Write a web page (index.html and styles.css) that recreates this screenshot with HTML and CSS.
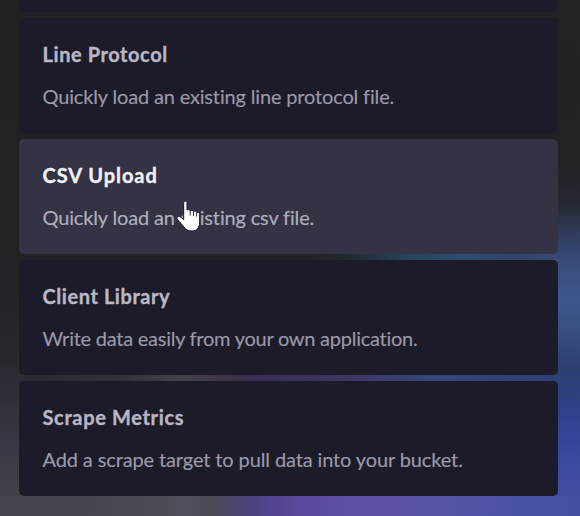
FILE: index.html
```
<!DOCTYPE html>
<html lang="en">
<head>
<meta charset="utf-8">
<title>Load Data</title>
<link rel="stylesheet" href="styles.css">
</head>
<body>
<main class="sources">
  <div class="card card-clipped"></div>
  <article class="card">
    <h2 class="title"><span class="t-line">Line Protocol</span></h2>
    <p class="desc"><span class="d-line">Quickly load an existing line protocol file.</span></p>
  </article>
  <article class="card card-active">
    <h2 class="title"><span class="t-csv">CSV Upload</span></h2>
    <p class="desc"><span class="d-csv">Quickly load an existing csv file.</span></p>
    <svg class="pointer" width="28" height="36" viewBox="0 0 28 36">
      <path d="M9.7 5.5C9.7 3.6 13 3.6 13 5.5V13.1C13.6 12.2 16 12.6 16.2 13.7C17 12.9 19.2 13.2 19.5 14.4C20.4 13.6 22.4 14.2 22.6 15.4C24 14.7 25.6 15.5 25.6 17.5V25C25.6 31 22.5 34 18 34C14.5 34 12 32.8 10 30L3.4 22.3C1.9 20.3 4.3 18.6 6.3 20L9.7 22.6Z"/>
      <path class="fingers" d="M16.2 13.7V18.6M19.5 14.4V19M22.6 15.4V19.6"/>
    </svg>
  </article>
  <article class="card">
    <h2 class="title"><span class="t-client">Client Library</span></h2>
    <p class="desc"><span class="d-client">Write data easily from your own application.</span></p>
  </article>
  <article class="card">
    <h2 class="title"><span class="t-scrape">Scrape Metrics</span></h2>
    <p class="desc"><span class="d-scrape">Add a scrape target to pull data into your bucket.</span></p>
  </article>
</main>
</body>
</html>
```
FILE: styles.css
```
* { box-sizing: border-box; }
html, body { margin: 0; height: 516px; overflow: hidden; }
body {
  font-family: Lato, sans-serif;
  font-size: 20px;
  font-variant-ligatures: none;
  /* bottom edge, glow between cards, then side edges */
  background:
    linear-gradient(90deg, #44444d 0, #46464e 100px, #504e58 185px, #4d495a 218px, #504188 260px, #5b479c 300px, #604fa8 355px, #5854a8 430px, #4c52a4 500px, #4350a2 580px) 0 496px / 580px 20px no-repeat,
    linear-gradient(90deg, #222125 0, #222125 285px, #22282f 320px, #22303f 341px, #264458 381px, #2b4d70 441px, #30446a 491px, #38496f 534px) 24px 254px / 529px 6px no-repeat,
    linear-gradient(90deg, #2a2a31 0, #302f36 90px, #424048 158px, #3a3148 215px, #3a3058 240px, #3c3560 320px, #37457a 410px, #30417a 480px, #2c3d78 529px) 24px 375px / 529px 6px no-repeat,
    linear-gradient(180deg, #202125 0, #222125 140px, #222126 260px, #28282f 360px, #2d2d35 385px, #383842 440px, #42424b 496px) 0 0 / 24px 496px no-repeat,
    linear-gradient(180deg, #212225 0, #222125 160px, #262932 205px, #2e3a56 230px, #3a4b78 260px, #3e588c 300px, #38507f 330px, #2d3f6e 368px, #2e4180 395px, #304290 420px, #3b48a0 460px, #434fa0 496px) 100% 0 / 27px 496px no-repeat,
    #222125;
}
.sources {
  display: flex;
  flex-direction: column;
  gap: 6px;
  padding: 0 22px 20px 19px;
}
.card {
  position: relative;
  height: 115px;
  padding: 24px 23.5px 0;
  border-radius: 5px;
  background: #1c1b29;
  color: #9b99a9;
}
.card-clipped { height: 12px; padding: 0; border-radius: 0 0 5px 5px; }
.card-active { background: #333345; color: #b0aebd; }
.title {
  margin: 0 0 18px;
  font-size: 20px;
  line-height: 24px;
  font-weight: 700;
  color: #b9b7c5;
  -webkit-text-stroke: 0.35px currentColor;
}
.card-active .title { color: #f2f1f5; }
.desc { margin: 0; line-height: 24px; white-space: nowrap; -webkit-text-stroke: 0.15px currentColor; }
.t-line { letter-spacing: 0.58px; }
.t-csv { letter-spacing: 0.95px; }
.t-client { letter-spacing: 0.57px; }
.t-scrape { letter-spacing: 0.65px; }
.d-line { letter-spacing: -0.16px; }
.d-csv { letter-spacing: -0.16px; }
.d-client { letter-spacing: -0.25px; }
.d-scrape { letter-spacing: -0.12px; }
.pointer { position: absolute; left: 155px; top: 58px; }
.pointer path { fill: #fff; stroke: #17172a; stroke-width: 1; }
.pointer .fingers { fill: none; stroke-width: 0.9; }
```
